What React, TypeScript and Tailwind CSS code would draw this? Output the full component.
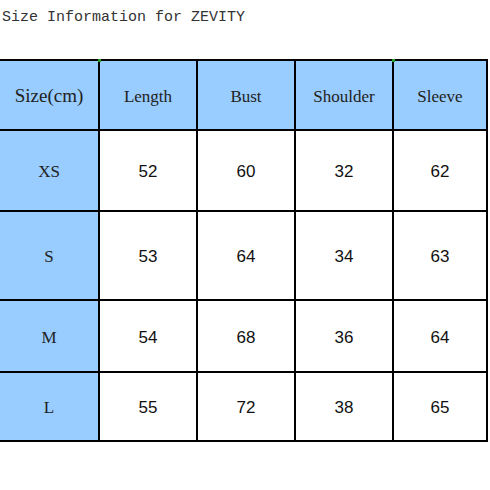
import { Fragment } from "react";

const headers = ["Length", "Bust", "Shoulder", "Sleeve"];

const rows = [
  { size: "XS", values: [52, 60, 32, 62], h: "h-[79px]" },
  { size: "S", values: [53, 64, 34, 63], h: "h-[87px]" },
  { size: "M", values: [54, 68, 36, 64], h: "h-[70px]" },
  { size: "L", values: [55, 72, 38, 65], h: "h-[67px]" },
];

export default function App() {
  return (
    <div className="w-[490px] h-[490px] bg-white overflow-hidden">
      <div className="h-[59px] pl-[2px] pt-[7px]">
        <p className="text-[15px] leading-[22px] text-[#333] font-['Liberation_Mono',monospace]">
          Size Information for ZEVITY
        </p>
      </div>

      <div className="relative w-[488px] bg-black pt-[2px] pr-[2px] pb-[2px] grid grid-cols-[98px_96px_96px_96px_92px] gap-[2px]">
        <div className="h-[68px] pt-[3px] bg-[#99ccff] flex items-center justify-center text-[19px] text-[#222] font-['Liberation_Serif',serif]">
          Size(cm)
        </div>
        {headers.map((h) => (
          <div
            key={h}
            className="h-[68px] pt-[3px] bg-[#99ccff] flex items-center justify-center text-[17px] text-[#222] font-['Liberation_Serif',serif]"
          >
            {h}
          </div>
        ))}

        {rows.map((r) => (
          <Fragment key={r.size}>
            <div
              className={`${r.h} pt-[3px] bg-[#99ccff] flex items-center justify-center text-[17px] text-[#222] font-['Liberation_Serif',serif]`}
            >
              {r.size}
            </div>
            {r.values.map((v, i) => (
              <div
                key={i}
                className={`${r.h} pt-[3px] bg-white flex items-center justify-center text-[17px] text-[#111] font-['Liberation_Sans',sans-serif]`}
              >
                {v}
              </div>
            ))}
          </Fragment>
        ))}

        <span className="absolute left-[98px] top-0 w-[3px] h-[3px] bg-[#2a9d2a]" />
        <span className="absolute left-[392px] top-0 w-[3px] h-[3px] bg-[#2a9d2a]" />
      </div>
    </div>
  );
}
